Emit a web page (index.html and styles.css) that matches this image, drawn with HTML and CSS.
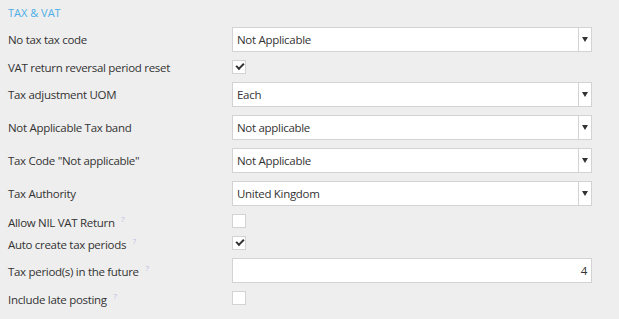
FILE: index.html
```html
<!DOCTYPE html>
<html lang="en">
<head>
  <meta charset="UTF-8">
  <title>Tax &amp; VAT</title>
  <link rel="stylesheet" href="styles.css">
</head>
<body>

  <div class="section">
    <h3 class="section-title">TAX &amp; VAT</h3>

    <div class="fields">
      <div class="row">
        <label>No tax tax code</label>
        <div class="select"><span>Not Applicable</span><b class="arrow"></b></div>
      </div>

      <div class="row check-row">
        <label>VAT return reversal period reset</label>
        <span class="checkbox checked"></span>
      </div>

      <div class="row">
        <label>Tax adjustment UOM</label>
        <div class="select"><span>Each</span><b class="arrow"></b></div>
      </div>

      <div class="row">
        <label>Not Applicable Tax band</label>
        <div class="select"><span>Not applicable</span><b class="arrow"></b></div>
      </div>

      <div class="row">
        <label>Tax Code "Not applicable"</label>
        <div class="select"><span>Not Applicable</span><b class="arrow"></b></div>
      </div>

      <div class="row">
        <label>Tax Authority</label>
        <div class="select"><span>United Kingdom</span><b class="arrow"></b></div>
      </div>

      <div class="row check-row">
        <label>Allow NIL VAT Return <sup class="help">?</sup></label>
        <span class="checkbox"></span>
      </div>

      <div class="row check-row">
        <label>Auto create tax periods <sup class="help">?</sup></label>
        <span class="checkbox checked"></span>
      </div>

      <div class="row">
        <label>Tax period(s) in the future <sup class="help">?</sup></label>
        <div class="input">4</div>
      </div>

      <div class="row check-row">
        <label>Include late posting <sup class="help">?</sup></label>
        <span class="checkbox"></span>
      </div>
    </div>
  </div>

</body>
</html>
```

FILE: styles.css
```css
body {
  margin: 0;
  background: #eeeeee;
  font-family: "Open Sans", Arial, sans-serif;
  font-size: 11.5px;
  letter-spacing: -0.3px;
  color: #333;
}
.section {
  padding: 6px 8px;
}
.section-title {
  margin: 0;
  font-size: 11px;
  font-weight: normal;
  letter-spacing: 0;
  color: #4dafe6;
  line-height: 13px;
}
.fields {
  display: flex;
  flex-direction: column;
  gap: 8px;
  margin-top: 8px;
}
.row {
  display: flex;
  align-items: center;
  height: 25px;
}
.check-row {
  height: 14px;
}
.row label {
  width: 224px;
  flex-shrink: 0;
}
.help {
  color: #c6b8e6;
  font-size: 8px;
  margin-left: 4px;
  vertical-align: 5px;
}
.select,
.input {
  box-sizing: border-box;
  width: 360px;
  height: 25px;
  background: #fff;
  border: 1px solid #d3d3d3;
  display: flex;
  align-items: center;
}
.select span {
  flex: 1;
  padding-left: 4px;
}
.arrow {
  width: 12px;
  height: 100%;
  border-left: 1px solid #d3d3d3;
  position: relative;
}
.arrow::after {
  content: "";
  position: absolute;
  left: 3px;
  top: 9px;
  border-left: 3px solid transparent;
  border-right: 3px solid transparent;
  border-top: 5px solid #333;
}
.input {
  justify-content: flex-end;
  padding-right: 4px;
}
.checkbox {
  box-sizing: border-box;
  width: 14px;
  height: 14px;
  background: #fff;
  border: 1px solid #d3d3d3;
  position: relative;
}
.checked::after {
  content: "";
  position: absolute;
  left: 3px;
  top: 2px;
  width: 6px;
  height: 3px;
  border-left: 2px solid #333;
  border-bottom: 2px solid #333;
  transform: rotate(-45deg);
}
```
